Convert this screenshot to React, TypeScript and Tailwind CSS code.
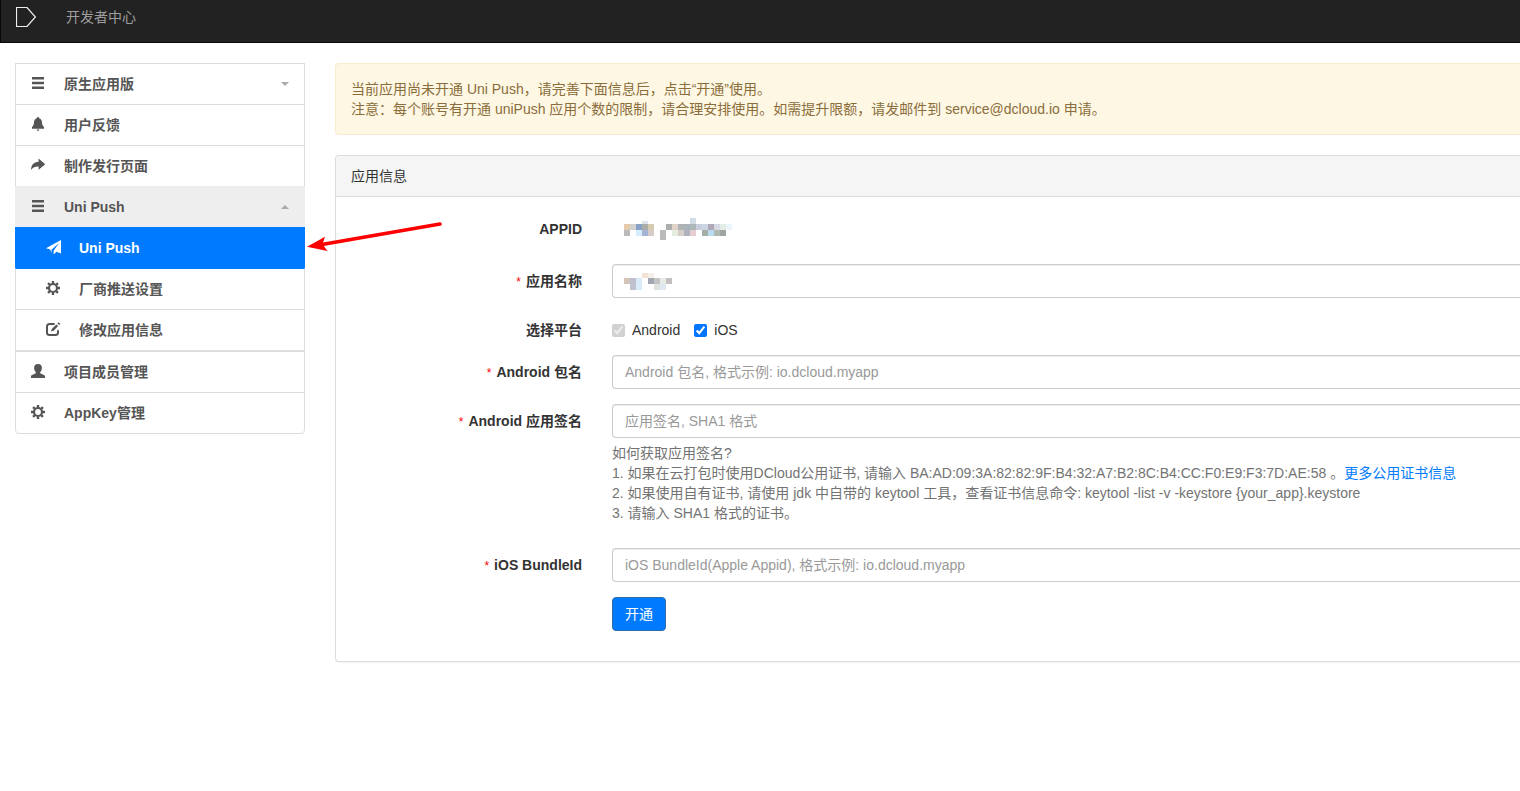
import type { ReactNode } from "react";

type Cell = [x: number, y: number, w: number, h: number, fill: string];

const appIdCells: Cell[] = [
  [18, 3, 6, 3, "#dfe3ee"],
  [66, 0, 6, 6, "#d0dde5"],
  [0, 6, 6, 6, "#e3caab"],
  [6, 6, 6, 6, "#d2d2d0"],
  [12, 6, 6, 6, "#87a2c4"],
  [18, 6, 6, 6, "#aaaca8"],
  [24, 6, 6, 6, "#d5cbb0"],
  [42, 6, 6, 6, "#a9adac"],
  [48, 6, 6, 6, "#dfd3c8"],
  [54, 6, 6, 6, "#b0b3b4"],
  [60, 6, 6, 6, "#a8b4b8"],
  [66, 6, 6, 6, "#adb8b9"],
  [72, 6, 6, 6, "#cacfdd"],
  [78, 6, 6, 6, "#cbd6e2"],
  [84, 6, 6, 6, "#b0a8b8"],
  [90, 6, 6, 6, "#d5d9e3"],
  [96, 6, 6, 6, "#e4ece7"],
  [102, 6, 6, 6, "#eaf4fb"],
  [0, 12, 6, 6, "#bababa"],
  [12, 12, 6, 6, "#d5ecff"],
  [18, 12, 6, 6, "#a5b4d4"],
  [24, 12, 6, 6, "#d6cdc8"],
  [36, 12, 6, 10, "#bababa"],
  [48, 12, 6, 6, "#e5ece0"],
  [54, 12, 6, 6, "#d5cec8"],
  [60, 12, 6, 6, "#b1b0bf"],
  [66, 12, 6, 6, "#e6cdd2"],
  [78, 12, 6, 6, "#a3afa5"],
  [84, 12, 6, 6, "#b8daf2"],
  [90, 12, 6, 6, "#b0b8b2"],
  [96, 12, 6, 6, "#9fa5a2"],
];

const nameCells: Cell[] = [
  [18, 0, 6, 5, "#f0e2d5"],
  [24, 0, 6, 5, "#f6efe8"],
  [0, 5, 6, 6, "#d5c5b8"],
  [6, 5, 6, 6, "#bfc0cb"],
  [12, 5, 6, 6, "#d9ebf8"],
  [24, 5, 6, 6, "#a2a6b0"],
  [30, 5, 6, 6, "#c4c4c4"],
  [36, 5, 6, 6, "#e6ece3"],
  [42, 5, 6, 6, "#c5bfc2"],
  [6, 11, 6, 6, "#bfc3d0"],
  [12, 11, 6, 6, "#d9ebf8"],
  [30, 11, 6, 6, "#dfe3e0"],
  [36, 11, 6, 6, "#dfe7f2"],
];

function Mosaic({ cells, width, height }: { cells: Cell[]; width: number; height: number }) {
  return (
    <svg width={width} height={height} shapeRendering="crispEdges" aria-hidden="true">
      {cells.map(([x, y, w, h, fill]) => (
        <rect key={`${x}-${y}`} x={x} y={y} width={w} height={h} fill={fill} />
      ))}
    </svg>
  );
}

const icons: Record<string, ReactNode> = {
  menu: <path d="M1 1h12v2.600H1zM1 5.700h12v2.600H1zM1 10.400h12V13H1z" />,
  bell: (
    <path d="M7 0c.7 0 1.100.5 1.100 1.200C9.900 1.700 10.900 3.200 11 5.200c.1 2.300.6 3.500 2 4.900v1.700H1v-1.700c1.400-1.400 1.900-2.600 2-4.900.1-2 1.100-3.500 2.900-4C5.900.5 6.300 0 7 0zM5.700 12.500h2.600c0 .9-.6 1.400-1.300 1.400s-1.300-.5-1.300-1.400z" />
  ),
  share: <path d="M7.600.6L14.200 6.200 7.600 11.800V8.600C4.300 8.500 2 9.300.2 12-.1 7.200 2.600 4 7.600 3.800z" />,
  plane: <path d="M15 0v13.600l-4.500-1.900L7.600 14.400V10.800L13 3 5.500 9.700 5.600 13 4.200 9.600 0 8.300z" />,
  gear: (
    <>
      <circle cx="7" cy="7" r="4" fill="none" stroke="currentColor" strokeWidth="2.200" />
      <path
        d="M7 0v2.400M7 11.600V14M0 7h2.400M11.600 7H14M2.050 2.050l1.700 1.700M10.250 10.250l1.700 1.700M2.050 11.950l1.700-1.700M10.250 3.750l1.700-1.700"
        fill="none"
        stroke="currentColor"
        strokeWidth="2.400"
      />
    </>
  ),
  edit: (
    <>
      <path d="M8.600 2H3.600C2 2 1 3 1 4.500v6C1 12 2 13 3.600 13h5.800c1.600 0 2.600-1 2.600-2.500V8.200" fill="none" stroke="currentColor" strokeWidth="2" />
      <path d="M10.400 2.400l1.700 1.700-4.400 4.600-2.700.9.900-2.800zM11.400 1.400l1.200-1.200 1.800 1.700-1.200 1.200z" />
    </>
  ),
  user: (
    <path d="M7 0c2.500 0 3.900 1.400 3.900 3.700 0 1.800-.6 3.300-1.600 4.300-.4.5-.3 1.300.4 1.600l3.200 1.500c.8.300 1.100.8 1.100 1.600V14H0v-1.300c0-.8.300-1.300 1.100-1.600l3.200-1.500c.7-.3.8-1.100.4-1.600-1-1-1.600-2.500-1.600-4.300C3.100 1.400 4.500 0 7 0z" />
  ),
};

function Icon({ name }: { name: string }) {
  return (
    <svg viewBox="0 0 14 16" className="h-4 w-3.5 shrink-0 overflow-visible" fill="currentColor" aria-hidden="true">
      {icons[name]}
    </svg>
  );
}

function Caret({ up = false }: { up?: boolean }) {
  return (
    <svg viewBox="0 0 8 4" className="ml-auto h-1 w-2" fill="#aaaaaa" aria-hidden="true">
      <path d={up ? "M0 4h8L4 0z" : "M0 0h8L4 4z"} />
    </svg>
  );
}

interface NavItemProps {
  icon: string;
  label: string;
  className?: string;
  children?: ReactNode;
}

function NavItem({ icon, label, className = "border-[#dddddd] px-[15px]", children }: NavItemProps) {
  return (
    <a href="#" className={`flex items-center gap-[19px] border-x border-t py-2.5 font-bold ${className}`}>
      <Icon name={icon} />
      <span>{label}</span>
      {children}
    </a>
  );
}

function FieldLabel({ htmlFor, required = false, children }: { htmlFor: string; required?: boolean; children: ReactNode }) {
  return (
    <label htmlFor={htmlFor} className="pt-[7px] text-right font-bold">
      {required && <span className="mr-[5px] text-xs leading-5 font-normal text-[#ff0000]">*</span>}
      {children}
    </label>
  );
}

function TextField({ id, placeholder }: { id: string; placeholder?: string }) {
  return (
    <input
      id={id}
      type="text"
      placeholder={placeholder}
      className="block h-[34px] w-full rounded-l border border-r-0 border-[#cccccc] bg-white px-3 shadow-[inset_0_1px_1px_rgba(0,0,0,0.075)] placeholder:text-[#999999]"
    />
  );
}

export default function App() {
  return (
    <div className="min-h-screen bg-white font-['Liberation_Sans','Noto_Sans_CJK_SC',sans-serif] text-sm leading-5 text-[#333333]">
      <header className="flex h-[43px] items-center gap-[30px] border-b border-l border-[#080808] bg-[#222222] pb-2 pl-[15px]">
        <a href="#" aria-label="DCloud">
          <svg width="20" height="20" viewBox="0 0 20 20" fill="none" stroke="#eeeeee" strokeWidth="1.2">
            <path d="M.5.5H11L19.400 10 11 19.500H.5z" />
          </svg>
        </a>
        <a href="#" className="text-[#9d9d9d]">开发者中心</a>
      </header>

      <div className="relative flex items-start gap-[30px] pt-5 pl-[15px]">
        <nav className="w-[290px] shrink-0 overflow-hidden rounded-b border-b border-[#dddddd] text-[#555555]">
          <NavItem icon="menu" label="原生应用版">
            <Caret />
          </NavItem>
          <NavItem icon="bell" label="用户反馈" />
          <NavItem icon="share" label="制作发行页面" />
          <NavItem icon="menu" label="Uni Push" className="border-[#eeeeee] bg-[#eeeeee] px-[15px]">
            <Caret up />
          </NavItem>
          <div className="border-b border-[#dddddd]">
            <NavItem icon="plane" label="Uni Push" className="border-[#007bff] bg-[#007bff] px-[30px] text-white" />
            <NavItem icon="gear" label="厂商推送设置" className="border-x-[#dddddd] border-t-[#007bff] px-[30px]" />
            <NavItem icon="edit" label="修改应用信息" className="border-[#dddddd] px-[30px]" />
          </div>
          <NavItem icon="user" label="项目成员管理" />
          <NavItem icon="gear" label="AppKey管理" className="rounded-b border-[#dddddd] px-[15px]" />
        </nav>

        <main className="min-w-0 flex-1">
          <div className="mb-5 rounded-l border border-r-0 border-[#faebcc] bg-[#fef7e3] p-[15px] text-[#8a6d3b]">
            <p>当前应用尚未开通 Uni Push，请完善下面信息后，点击“开通”使用。</p>
            <p>注意：每个账号有开通 uniPush 应用个数的限制，请合理安排使用。如需提升限额，请发邮件到 service@dcloud.io 申请。</p>
          </div>

          <section className="rounded-l border border-r-0 border-[#dddddd] shadow-[0_1px_1px_rgba(0,0,0,0.05)]">
            <h2 className="rounded-tl border-b border-[#dddddd] bg-[#f5f5f5] px-[15px] py-2.5">应用信息</h2>

            <form className="grid grid-cols-[231px_1fr] gap-x-[30px] gap-y-[15px] pt-[15px] pb-[30px] pl-[15px]">
              <span className="pt-[7px] text-right font-bold">APPID</span>
              <div className="h-[37px] pt-1.5 pl-3">
                <Mosaic cells={appIdCells} width={108} height={22} />
              </div>

              <FieldLabel htmlFor="app-name" required>应用名称</FieldLabel>
              <div className="relative">
                <TextField id="app-name" />
                <div className="pointer-events-none absolute top-[9px] left-3">
                  <Mosaic cells={nameCells} width={48} height={17} />
                </div>
              </div>

              <FieldLabel htmlFor="platform-android">选择平台</FieldLabel>
              <div className="flex gap-3.5 pt-[7px]">
                <label className="flex items-center gap-[7px]">
                  <input id="platform-android" type="checkbox" defaultChecked disabled className="size-[13px]" />
                  Android
                </label>
                <label className="flex items-center gap-[7px]">
                  <input type="checkbox" defaultChecked className="size-[13px]" />
                  iOS
                </label>
              </div>

              <FieldLabel htmlFor="android-package" required>Android 包名</FieldLabel>
              <TextField id="android-package" placeholder="Android 包名, 格式示例: io.dcloud.myapp" />

              <FieldLabel htmlFor="android-sign" required>Android 应用签名</FieldLabel>
              <div className="pb-2.5">
                <TextField id="android-sign" placeholder="应用签名, SHA1 格式" />
                <div className="mt-[5px] text-[#737373]">
                  <p>如何获取应用签名?</p>
                  <p>
                    1. 如果在云打包时使用DCloud公用证书, 请输入 BA:AD:09:3A:82:82:9F:B4:32:A7:B2:8C:B4:CC:F0:E9:F3:7D:AE:58 。
                    <a href="#" className="text-[#007bff]">更多公用证书信息</a>
                  </p>
                  <p>2. 如果使用自有证书, 请使用 jdk 中自带的 keytool 工具，查看证书信息命令: keytool -list -v -keystore {"{your_app}"}.keystore</p>
                  <p>3. 请输入 SHA1 格式的证书。</p>
                </div>
              </div>

              <FieldLabel htmlFor="ios-bundle" required>iOS BundleId</FieldLabel>
              <TextField id="ios-bundle" placeholder="iOS BundleId(Apple Appid), 格式示例: io.dcloud.myapp" />

              <button type="button" className="col-start-2 h-[34px] justify-self-start rounded border border-[#2e6da4] bg-[#007bff] px-3 text-white">
                开通
              </button>
            </form>
          </section>
        </main>

        {/* red pointer to the active menu entry */}
        <svg className="pointer-events-none absolute top-[177px] left-[307px]" width="136" height="34" viewBox="0 0 136 34" aria-hidden="true">
          <path d="M12 25L133 4" stroke="#ff0000" strokeWidth="3.600" strokeLinecap="round" />
          <path d="M0 26.700L18 16.700 15.500 24.300 20.500 31z" fill="#ff0000" />
        </svg>
      </div>
    </div>
  );
}
